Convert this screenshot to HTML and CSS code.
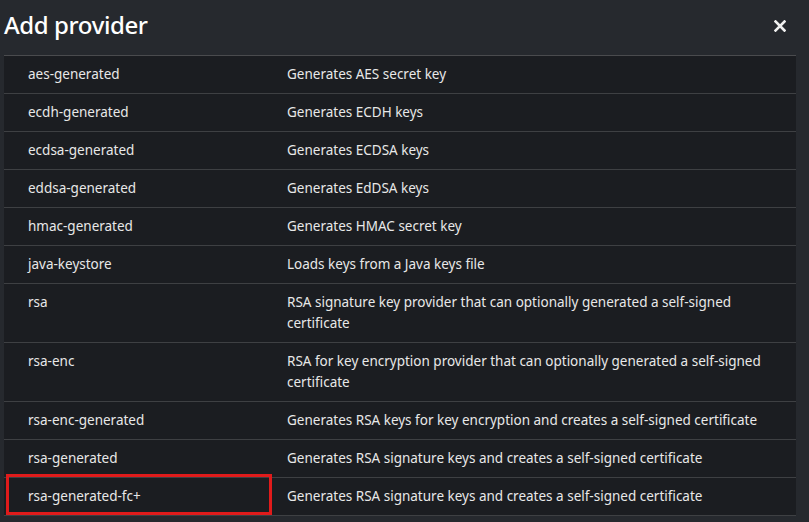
FILE: index.html
```html
<!DOCTYPE html>
<html>
<head>
<meta charset="utf-8">
<link rel="stylesheet" href="styles.css">
</head>
<body>
<div class="modal">
  <header class="head">
    <h1 class="title">Add provider</h1>
    <button class="close" aria-label="Close">
      <svg width="12" height="12" viewBox="0 0 12 12"><path d="M1.5 1.5 L10.5 10.5 M10.5 1.5 L1.5 10.5" stroke="#f0f0f0" stroke-width="2.6" stroke-linecap="square"/></svg>
    </button>
  </header>
  <table class="providers">
    <tbody>
      <tr><td class="name">aes-generated</td><td class="desc">Generates AES secret key</td></tr>
      <tr><td class="name">ecdh-generated</td><td class="desc">Generates ECDH keys</td></tr>
      <tr><td class="name">ecdsa-generated</td><td class="desc">Generates ECDSA keys</td></tr>
      <tr><td class="name">eddsa-generated</td><td class="desc">Generates EdDSA keys</td></tr>
      <tr><td class="name">hmac-generated</td><td class="desc">Generates HMAC secret key</td></tr>
      <tr><td class="name">java-keystore</td><td class="desc">Loads keys from a Java keys file</td></tr>
      <tr><td class="name">rsa</td><td class="desc">RSA signature key provider that can optionally generated a self-signed certificate</td></tr>
      <tr><td class="name">rsa-enc</td><td class="desc">RSA for key encryption provider that can optionally generated a self-signed certificate</td></tr>
      <tr><td class="name">rsa-enc-generated</td><td class="desc">Generates RSA keys for key encryption and creates a self-signed certificate</td></tr>
      <tr><td class="name">rsa-generated</td><td class="desc">Generates RSA signature keys and creates a self-signed certificate</td></tr>
      <tr class="marked"><td class="name"><span class="mark"></span>rsa-generated-fc+</td><td class="desc">Generates RSA signature keys and creates a self-signed certificate</td></tr>
    </tbody>
  </table>
</div>
</body>
</html>
```
FILE: styles.css
```css
html, body {
  margin: 0;
  padding: 0;
  background: #26292e;
  height: 100%;
  overflow: hidden;
}
body {
  font-family: "Noto Sans", "Open Sans", sans-serif;
  color: #e0e0e0;
}
.modal {
  padding: 0 13px 0 4px;
}
.head {
  display: flex;
  align-items: center;
  justify-content: space-between;
  height: 55px;
}
.title {
  margin: 0;
  font-size: 24px;
  font-weight: 500;
  color: #ffffff;
  letter-spacing: -0.4px;
  line-height: 1;
  padding-bottom: 6px;
}
.close {
  background: none;
  border: 0;
  padding: 0;
  margin-right: 10px;
  width: 12px;
  height: 12px;
  display: flex;
  margin-bottom: 4px;
}
.providers {
  width: 100%;
  border-collapse: collapse;
  background: #1b1d21;
  border-top: 1px solid #4a4b4e;
  font-size: 13.5px;
  line-height: 21px;
}
.providers td {
  border-bottom: 1px solid #3e4043;
  padding: 8px 24px 8px 24px;
  vertical-align: top;
  color: #e8e8e8;
}
.providers td.name {
  width: 211px;
}
.marked td.name {
  position: relative;
}
.mark {
  position: absolute;
  left: 2px;
  top: -4px;
  width: 260px;
  height: 35px;
  border: 3px solid #e01b1b;
}
```
